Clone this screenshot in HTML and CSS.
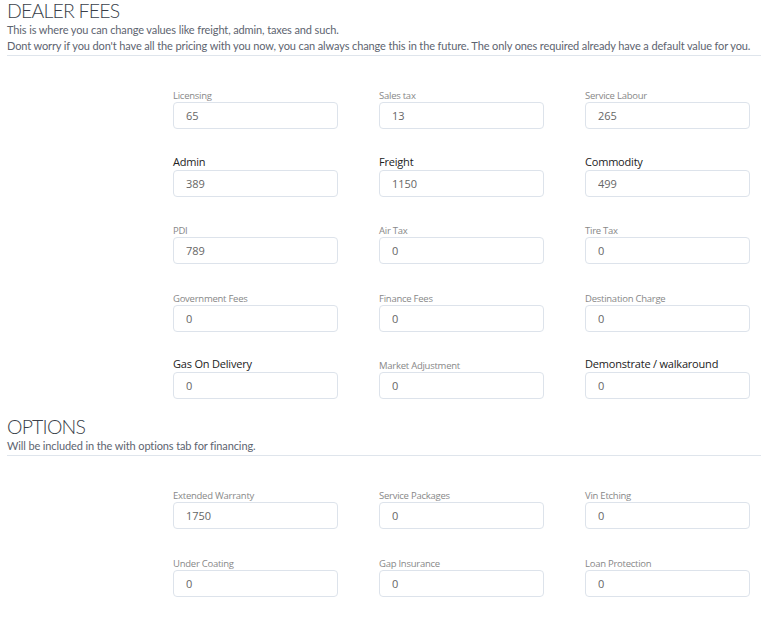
FILE: index.html
```html
<!DOCTYPE html>
<html>
<head>
<meta charset="utf-8">
<link rel="stylesheet" href="styles.css">
</head>
<body>
<section class="section">
  <div class="head">
    <h1 class="title">DEALER FEES</h1>
    <p class="sub">This is where you can change values like freight, admin, taxes and such.</p>
    <p class="sub">Dont worry if you don't have all the pricing with you now, you can always change this in the future. The only ones required already have a default value for you.</p>
  </div>
  <div class="grid">
    <label class="field"><span class="lbl">Licensing</span><input class="inp" value="65"></label>
    <label class="field"><span class="lbl">Sales tax</span><input class="inp" value="13"></label>
    <label class="field"><span class="lbl">Service Labour</span><input class="inp" value="265"></label>
    <label class="field"><span class="lbl big">Admin</span><input class="inp" value="389"></label>
    <label class="field"><span class="lbl big">Freight</span><input class="inp" value="1150"></label>
    <label class="field"><span class="lbl big">Commodity</span><input class="inp" value="499"></label>
    <label class="field"><span class="lbl">PDI</span><input class="inp" value="789"></label>
    <label class="field"><span class="lbl">Air Tax</span><input class="inp" value="0"></label>
    <label class="field"><span class="lbl">Tire Tax</span><input class="inp" value="0"></label>
    <label class="field"><span class="lbl">Government Fees</span><input class="inp" value="0"></label>
    <label class="field"><span class="lbl">Finance Fees</span><input class="inp" value="0"></label>
    <label class="field"><span class="lbl">Destination Charge</span><input class="inp" value="0"></label>
    <label class="field"><span class="lbl big">Gas On Delivery</span><input class="inp" value="0"></label>
    <label class="field"><span class="lbl">Market Adjustment</span><input class="inp" value="0"></label>
    <label class="field"><span class="lbl big">Demonstrate / walkaround</span><input class="inp" value="0"></label>
  </div>
</section>
<section class="section options">
  <div class="head">
    <h1 class="title">OPTIONS</h1>
    <p class="sub">Will be included in the with options tab for financing.</p>
  </div>
  <div class="grid">
    <label class="field"><span class="lbl">Extended Warranty</span><input class="inp" value="1750"></label>
    <label class="field"><span class="lbl">Service Packages</span><input class="inp" value="0"></label>
    <label class="field"><span class="lbl">Vin Etching</span><input class="inp" value="0"></label>
    <label class="field"><span class="lbl">Under Coating</span><input class="inp" value="0"></label>
    <label class="field"><span class="lbl">Gap Insurance</span><input class="inp" value="0"></label>
    <label class="field"><span class="lbl">Loan Protection</span><input class="inp" value="0"></label>
  </div>
</section>
</body>
</html>
```
FILE: styles.css
```css
html, body {
  margin: 0;
  padding: 0;
  background: #ffffff;
}
body {
  font-family: "Lato", "Open Sans", sans-serif;
  color: #333;
}
.section {
  padding-left: 7px;
}
.head {
  border-bottom: 1px solid #dfe5ec;
  padding-bottom: 1px;
}
.title {
  margin: 0;
  font-family: "Lato", sans-serif;
  font-weight: 300;
  font-size: 19.5px;
  line-height: 22px;
  color: #3a3f4a;
  letter-spacing: -0.8px;
}
.sub {
  margin: 0;
  font-family: "Lato", sans-serif;
  font-size: 11px;
  line-height: 16px;
  color: #5d6470;
  letter-spacing: -0.12px;
  white-space: nowrap;
}
.grid {
  display: grid;
  grid-template-columns: repeat(3, 165px);
  grid-auto-rows: 43px;
  column-gap: 41px;
  row-gap: 24.5px;
  padding: 30px 0 0 166px;
}
.options {
  margin-top: 17px;
}
.field {
  display: flex;
  flex-direction: column;
  justify-content: flex-end;
}
.lbl {
  font-family: "Open Sans", sans-serif;
  font-size: 9.5px;
  line-height: 12px;
  height: 12px;
  color: #888;
  letter-spacing: -0.25px;
  white-space: nowrap;
}
.lbl.big {
  font-size: 11px;
  line-height: 16px;
  height: 16px;
  color: #222;
  letter-spacing: -0.2px;
}
.inp {
  box-sizing: border-box;
  width: 165px;
  height: 27px;
  border: 1px solid #dde3eb;
  border-radius: 4px;
  padding: 0 12px;
  font-family: "Open Sans", sans-serif;
  font-size: 11px;
  color: #666;
  background: #fff;
  outline: none;
}
```
